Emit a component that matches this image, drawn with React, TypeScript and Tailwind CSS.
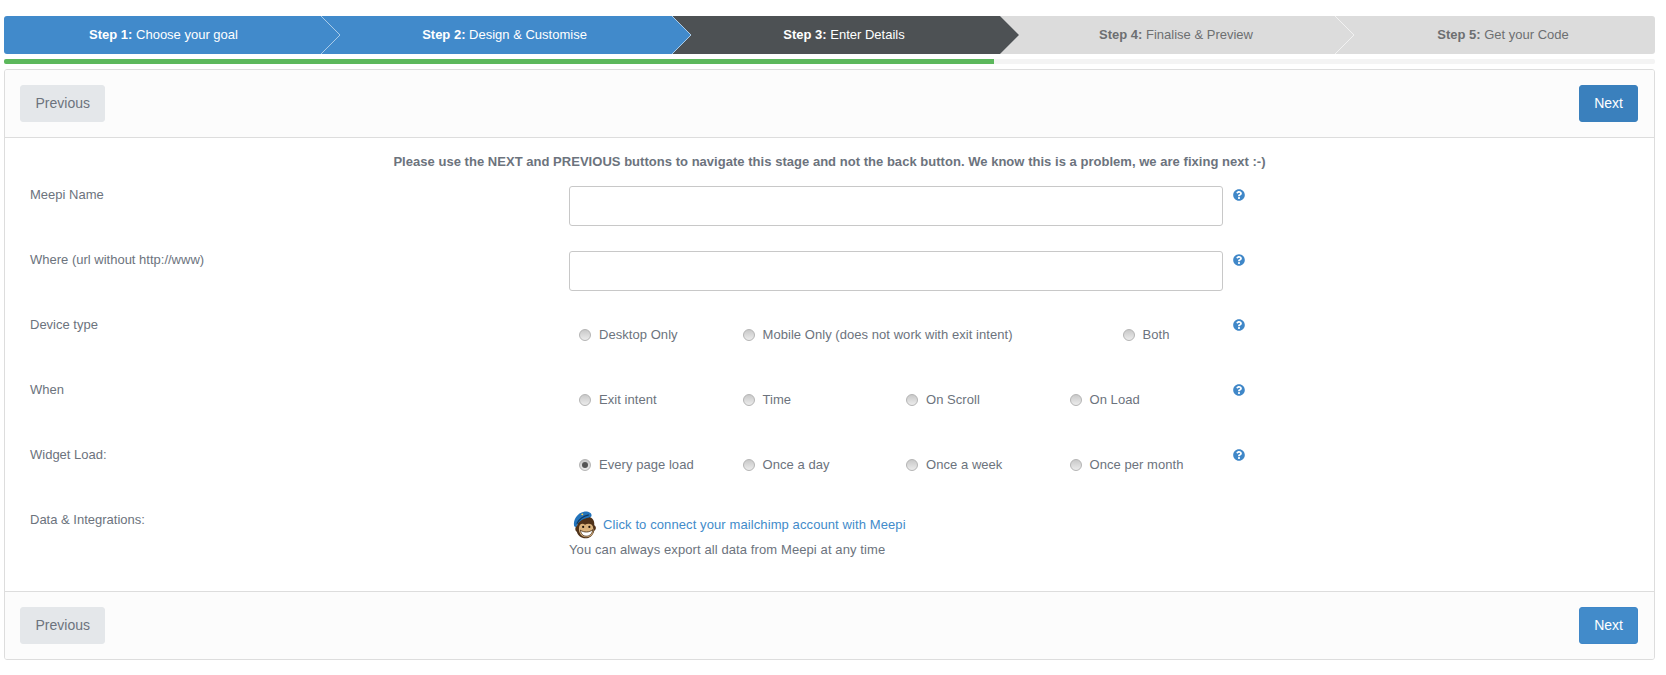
import React from "react";
import { FaQuestionCircle } from "react-icons/fa";

const steps = [
  { n: "Step 1:", t: "Choose your goal", w: "w-[317px]", bg: "bg-[#418acb]", tc: "text-white", pl: "pl-[2px]", arrow: "#418acb", line: "#a9cbe8", r: "rounded-l-[3px]" },
  { n: "Step 2:", t: "Design & Customise", w: "w-[351px]", bg: "bg-[#418acb]", tc: "text-white", pl: "pl-[16px]", arrow: "#418acb", line: "#a9cbe8", r: "" },
  { n: "Step 3:", t: "Enter Details", w: "w-[328px]", bg: "bg-[#4d5154]", tc: "text-white", pl: "pl-[16px]", arrow: "#4d5154", line: "#9a9c9e", r: "" },
  { n: "Step 4:", t: "Finalise & Preview", w: "w-[335px]", bg: "bg-[#dcdcdc]", tc: "text-[#6d6f71]", pl: "pl-[17px]", arrow: "#dcdcdc", line: "#f2f2f2", r: "" },
  { n: "Step 5:", t: "Get your Code", w: "flex-1", bg: "bg-[#dcdcdc]", tc: "text-[#6d6f71]", pl: "pl-[16px]", arrow: "", line: "", r: "rounded-r-[3px]" },
];

function Steps() {
  return (
    <div className="flex h-[38px] text-[13px]">
      {steps.map((s, i) => (
        <div key={i} className={`relative flex items-center justify-center ${s.w} ${s.bg} ${s.tc} ${s.pl} ${s.r}`}>
          <span><b>{s.n}</b> {s.t}</span>
          {s.arrow && (
            <svg className="absolute top-0 left-full z-10 h-[38px] w-[20px]" viewBox="0 0 20 38">
              <path d="M0 0 L19 19 L0 38 Z" fill={s.arrow} />
              <path d="M0 0 L19 19 L0 38" fill="none" stroke={s.line} strokeWidth="1" />
            </svg>
          )}
        </div>
      ))}
    </div>
  );
}

function Toolbar({ top }: { top?: boolean }) {
  return (
    <div className={`flex h-[68px] items-center justify-between bg-[#fcfcfc] pl-[15px] pr-[16px] ${top ? "border-b border-[#dddddd]" : "border-t border-[#dddddd]"}`}>
      <button className="h-[37px] rounded-[3px] border border-[#e4e7ea] bg-[#e4e7ea] px-[14.5px] text-[14px] text-[#6c737d]">Previous</button>
      <button className={`h-[37px] rounded-[3px] border px-[14px] text-[14px] text-white ${top ? "border-[#3a80bd] bg-[#3a80bd]" : "border-[#3f87c8] bg-[#428bca]"}`}>Next</button>
    </div>
  );
}

function Help() {
  return <FaQuestionCircle className="ml-[10px] mt-[3px] text-[12px] text-[#3f87c8]" />;
}

function Row({ label, children, last }: { label: string; children: React.ReactNode; last?: boolean }) {
  return (
    <div className={`flex ${last ? "" : "h-[65px]"}`}>
      <div className="w-[539px] leading-[18px]">{label}</div>
      <div className="w-[654px]">{children}</div>
      {!last && <Help />}
    </div>
  );
}

function Field() {
  return <input type="text" className="block h-[40px] w-[654px] rounded-[3px] border border-[#c8c8c8] bg-white outline-none" />;
}

function Radio({ label, checked, name }: { label: string; checked?: boolean; name: string }) {
  return (
    <label className="flex items-center whitespace-nowrap leading-[18px] tracking-[0.05px]">
      <span className="relative mr-[8px] flex h-[12px] w-[12px] shrink-0 items-center justify-center">
        <input
          type="radio"
          name={name}
          defaultChecked={checked}
          className="h-[12px] w-[12px] appearance-none rounded-full border border-[#b4b4b4] bg-gradient-to-b from-[#c9c9c9] to-[#ececec]"
        />
        {checked && <span className="absolute h-[6px] w-[6px] rounded-full bg-[#555555]" />}
      </span>
      {label}
    </label>
  );
}

function MailchimpLogo() {
  return (
    <svg width="24" height="28" viewBox="2 0 22 25.5" className="shrink-0">
      <path d="M6 13 C5 8 9 5 14 5 C19 5 22 8 21.5 13 C23.5 14 23.5 17 21.5 18 C20.5 22.5 17 25 13.5 25 C9.5 25 6.5 22.5 5.5 19 C3.5 18 3.8 14 6 13 Z" fill="#4f3219" />
      <path d="M7.5 15.5 C7.5 11.5 11 10.5 13 12.5 C16 10.5 20.5 11.5 20.5 15.5 C21.5 19 20 23.8 14 24 C9 23.8 7 19 7.5 15.5 Z" fill="#d9b27c" />
      <path d="M8.8 17.5 C12 19.8 17 19.8 20 17 C19.8 21 17 23 14 23 C11 23 9.2 20.5 8.8 17.5 Z" fill="#ffffff" stroke="#3e2510" strokeWidth="0.7" />
      <circle cx="11.3" cy="14.5" r="1" fill="#1e1208" />
      <circle cx="17" cy="14.5" r="1" fill="#1e1208" />
      <path d="M3 13.5 C2 8 6 1.5 12 0.5 C16 0 19.5 1.5 19 4.5 C18.8 6 14 6 10.5 8 C7.5 9.7 6 12 5.3 13.8 C4.8 14.8 3.3 14.8 3 13.5 Z" fill="#2273bb" />
      <path d="M5.5 11.5 C7.5 7.5 11.5 4.5 16.5 3.5" fill="none" stroke="#0e3a63" strokeWidth="1" />
      <circle cx="10.5" cy="3" r="0.9" fill="#ffd34d" />
    </svg>
  );
}

export default function App() {
  return (
    <div className="min-h-[675px] bg-white pt-[16px] pl-[4px] pr-[11px] font-['Liberation_Sans',Arial,sans-serif] text-[13px] text-[#6c737d]">
      <Steps />
      <div className="mt-[5px] h-[5px] overflow-hidden rounded-[2px] bg-[#f4f4f4]">
        <div className="h-full w-[990px] bg-[#5cb85c]" />
      </div>
      <div className="mt-[5px] overflow-hidden rounded-[3px] border border-[#dddddd]">
        <Toolbar top />
        <div className="h-[453px] px-[25px]">
          <p className="mb-[15px] pt-[15px] text-center font-bold leading-[18px] tracking-[0.03px]">
            Please use the NEXT and PREVIOUS buttons to navigate this stage and not the back button. We know this is a problem, we are fixing next :-)
          </p>
          <Row label="Meepi Name"><Field /></Row>
          <Row label="Where (url without http://www)"><Field /></Row>
          <Row label="Device type">
            <div className="grid grid-cols-[163.5px_380px_auto] pl-[10px] pt-[10px]">
              <Radio name="device" label="Desktop Only" />
              <Radio name="device" label="Mobile Only (does not work with exit intent)" />
              <Radio name="device" label="Both" />
            </div>
          </Row>
          <Row label="When">
            <div className="grid grid-cols-[repeat(4,163.5px)] pl-[10px] pt-[10px]">
              <Radio name="when" label="Exit intent" />
              <Radio name="when" label="Time" />
              <Radio name="when" label="On Scroll" />
              <Radio name="when" label="On Load" />
            </div>
          </Row>
          <Row label="Widget Load:">
            <div className="grid grid-cols-[repeat(4,163.5px)] pl-[10px] pt-[10px]">
              <Radio name="load" label="Every page load" checked />
              <Radio name="load" label="Once a day" />
              <Radio name="load" label="Once a week" />
              <Radio name="load" label="Once per month" />
            </div>
          </Row>
          <Row label="Data & Integrations:" last>
            <div className="flex items-center pl-[4px]">
              <MailchimpLogo />
              <a className="ml-[6px] tracking-[0.1px] text-[#428bca]">Click to connect your mailchimp account with Meepi</a>
            </div>
            <div className="mt-[2px] leading-[18px] tracking-[0.1px]">You can always export all data from Meepi at any time</div>
          </Row>
        </div>
        <Toolbar />
      </div>
    </div>
  );
}
